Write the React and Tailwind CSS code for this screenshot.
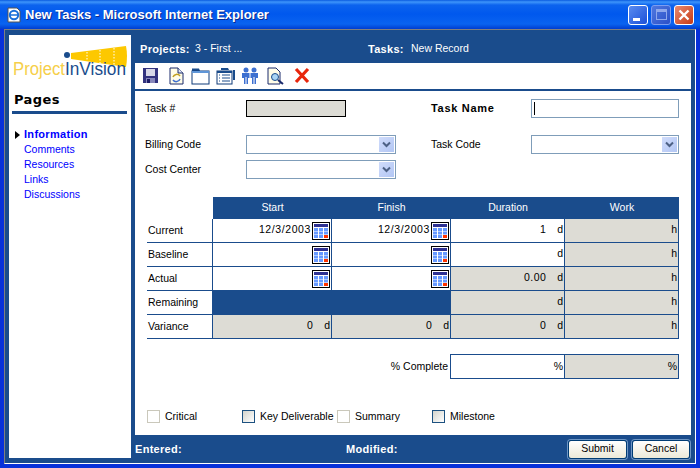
import React from 'react';

const labelFont = "font-['Liberation_Sans',sans-serif] text-[10.5px]";
const boldFont = "font-['Liberation_Sans',sans-serif] text-[11px] font-bold tracking-[0.3px]";

const CalendarIcon = () => (
  <svg width="18" height="18" viewBox="0 0 18 18" className="block mr-[1px]">
    <rect x="0" y="0" width="18" height="18" fill="#000" />
    <rect x="1" y="1" width="16" height="16" fill="#fff" />
    <rect x="2" y="2" width="14" height="3" fill="#2e3192" />
    {[6, 9.5, 13].map((y) =>
      [2, 7, 12].map((x) => (
        <rect key={`${x}-${y}`} x={x} y={y} width="4" height="3" fill={x === 12 && y === 13 ? '#ff3300' : '#6699ff'} />
      ))
    )}
  </svg>
);

const Chevron = () => (
  <div className="w-[15px] h-[15px] bg-[linear-gradient(135deg,#d0dcfb,#b2c6f4)] flex items-center justify-center">
    <svg width="9" height="7" viewBox="0 0 9 7">
      <path d="M1 1.5 L4.5 5 L8 1.5" fill="none" stroke="#4d6185" strokeWidth="2" />
    </svg>
  </div>
);

const SelectBox = ({ className }) => (
  <div className={`h-[19px] border border-[#7f9db9] bg-white flex items-center justify-end pr-[1px] ${className}`}>
    <Chevron />
  </div>
);

const ToolIcon = ({ className, children }) => (
  <svg width="20" height="18" viewBox="0 0 20 18" className={className}>
    {children}
  </svg>
);

const Toolbar = () => (
  <div className="h-[26px] bg-white flex items-center pl-[8px] mr-[4px]">
    <ToolIcon>
      <path d="M0 1 H15 V16 H0 Z" fill="#33337f" />
      <rect x="3" y="2" width="9" height="7" fill="#d8d8e8" />
      <rect x="3" y="11" width="9" height="5" fill="#8888bb" />
      <rect x="4" y="12" width="3" height="4" fill="#1c1c66" />
    </ToolIcon>
    <ToolIcon className="ml-[5px]">
      <path d="M2 1 H10 L15 6 V17 H2 Z" fill="#fffde8" stroke="#1a2a6c" />
      <path d="M10 1 V6 H15" fill="#dfe6f5" stroke="#1a2a6c" />
      <path d="M5 10 A4 4 0 0 1 12 9" fill="none" stroke="#c0a020" strokeWidth="1.5" />
      <path d="M12 12 A4 4 0 0 1 5 13" fill="none" stroke="#3f6fd0" strokeWidth="1.5" />
    </ToolIcon>
    <ToolIcon className="ml-[3px]">
      <path d="M1 4 V1.5 H8 L9 4" fill="#1a4c8c" />
      <rect x="1" y="4" width="17" height="13" fill="#fff" stroke="#0f3a78" strokeWidth="1" />
      <rect x="1" y="4" width="17" height="2" fill="#5f96d8" />
    </ToolIcon>
    <ToolIcon className="ml-[5px]">
      <path d="M5 3 V1 H12 L13 3 H19 V13 H17 V3" fill="#1a4c8c" />
      <rect x="1" y="4" width="15" height="13" fill="#fff" stroke="#0f3a78" />
      <rect x="1" y="4" width="15" height="2" fill="#1a4c8c" />
      <path d="M3 8 H4 M6 8 H14 M3 11 H4 M6 11 H14 M3 14 H4 M6 14 H14" stroke="#1a4c8c" />
    </ToolIcon>
    <ToolIcon className="ml-[6px]">
      <circle cx="4" cy="3" r="2.5" fill="#3c6fd0" />
      <circle cx="12" cy="3" r="2.5" fill="#3c6fd0" />
      <path d="M0 6 H7.5 V11 H6 V17 H2 V11 H0 Z M8.5 6 H16 V11 H14 V17 H10 V11 H8.5 Z" fill="#3c6fd0" />
      <path d="M4 10 V17 M12 10 V17" stroke="#fff" />
    </ToolIcon>
    <ToolIcon className="ml-[5px]">
      <path d="M1 1 H9 L13 5 V17 H1 Z" fill="#fffde8" stroke="#1a2a6c" />
      <circle cx="8" cy="10" r="3.5" fill="#a8d4f4" stroke="#1a4c8c" />
      <path d="M11 13 L16 17" stroke="#1a2a6c" strokeWidth="2" />
    </ToolIcon>
    <ToolIcon className="ml-[7px]">
      <path d="M2 2 L14 15 M14 2 L2 15" stroke="#e8260c" strokeWidth="3.2" />
    </ToolIcon>
  </div>
);

const Logo = () => (
  <svg width="122" height="38" viewBox="0 0 122 38" className="block ml-[3px] mt-[9px]">
    <path d="M59 9 L114 2 Q116 12 114 23 L59 15 Z" fill="#fdc800" />
    <path d="M75 8 V17 M88 6 V20 M102 4 V22" stroke="#fff" strokeDasharray="1.5 1.5" />
    <circle cx="55" cy="11" r="3" fill="#1a4c8c" />
    <text x="1" y="31" fontFamily="Liberation Sans" fontSize="18" fill="#f6cf4a" textLength="52" lengthAdjust="spacingAndGlyphs">Project</text>
    <text x="53" y="31" fontFamily="Liberation Sans" fontSize="18" fill="#1a4c8c" textLength="61" lengthAdjust="spacingAndGlyphs">InVision</text>
  </svg>
);

const navItems = ['Comments', 'Resources', 'Links', 'Discussions'];

const Sidebar = () => (
  <div className="w-[122px] mb-[5px] bg-white shrink-0">
    <Logo />
    <div className="mt-[8px] ml-[3px] mr-[4px] border-b-[3px] border-[#1a4c8c] h-[24px] pl-[2px] font-['DejaVu_Sans',sans-serif] font-bold text-[13px] leading-[20px] text-black tracking-[0.4px]">
      Pages
    </div>
    <div className={`${labelFont} text-[#0000ff] mt-[13px] pl-[15px] leading-[15px]`}>
      <div className={`${boldFont} flex items-center`}>
        <span className="w-0 -ml-[9px] mr-[4px] h-0 border-y-[4px] border-y-transparent border-l-[5px] border-l-black" />
        Information
      </div>
      {navItems.map((item) => (
        <div key={item}>{item}</div>
      ))}
    </div>
  </div>
);

const NumCell = ({ value, unit, gray }) => (
  <div className={`border-r border-b border-[#1a4c8c] flex items-center justify-end pr-[1px] pb-[1px] ${gray ? 'bg-[#dddcd5]' : 'bg-white'}`}>
    {value && <span className="tracking-[0.4px]">{value}</span>}
    <span className={value ? 'ml-[11px]' : ''}>{unit}</span>
  </div>
);

const DateCell = ({ value }) => (
  <div className="border-r border-b border-[#1a4c8c] bg-white flex items-center justify-end">
    {value && <span className="mr-[1px] pb-[1px] tracking-[0.6px]">{value}</span>}
    <CalendarIcon />
  </div>
);

const RowLabel = ({ children }) => (
  <div className="border-r border-b border-[#1a4c8c] flex items-center pl-[1px] pt-[1px]">{children}</div>
);

const ScheduleTable = () => (
  <div className={`${labelFont} ml-[12px] mt-[18px] w-[532px] grid grid-cols-[66px_119px_119px_114px_114px] grid-rows-[22px_24px_24px_24px_24px_24px] text-black`}>
    <div />
    {['Start', 'Finish', 'Duration', 'Work'].map((h) => (
      <div key={h} className="bg-[#1a4c8c] text-white flex items-center justify-center">{h}</div>
    ))}

    <RowLabel>Current</RowLabel>
    <DateCell value="12/3/2003" />
    <DateCell value="12/3/2003" />
    <NumCell value="1" unit="d" />
    <NumCell unit="h" gray />

    <RowLabel>Baseline</RowLabel>
    <DateCell />
    <DateCell />
    <NumCell unit="d" />
    <NumCell unit="h" gray />

    <RowLabel>Actual</RowLabel>
    <DateCell />
    <DateCell />
    <NumCell value="0.00" unit="d" gray />
    <NumCell unit="h" gray />

    <RowLabel>Remaining</RowLabel>
    <div className="col-span-2 bg-[#1a4c8c] border-r border-b border-[#1a4c8c]" />
    <NumCell unit="d" gray />
    <NumCell unit="h" gray />

    <RowLabel>Variance</RowLabel>
    <NumCell value="0" unit="d" gray />
    <NumCell value="0" unit="d" gray />
    <NumCell value="0" unit="d" gray />
    <NumCell unit="h" gray />
  </div>
);

const PercentRow = () => (
  <div className={`${labelFont} mt-[15px] ml-[12px] flex h-[25px] text-black`}>
    <div className="w-[303px] flex items-center justify-end pr-[2px]">% Complete</div>
    <div className="w-[115px] border border-[#1a4c8c] bg-white flex items-center justify-end pr-[1px]">%</div>
    <div className="w-[114px] border-y border-r border-[#1a4c8c] bg-[#dddcd5] flex items-center justify-end pr-[1px]">%</div>
  </div>
);

const Check = ({ label, active, className }) => (
  <div className={`flex items-center whitespace-nowrap ${className}`}>
    <span className={`w-[13px] h-[13px] border shrink-0 ${active ? 'border-[#1c5180] bg-[linear-gradient(135deg,#d4d4cc,#ffffff)]' : 'border-[#cac8bb] bg-white'}`} />
    <span className="ml-[5px]">{label}</span>
  </div>
);

const Button = ({ label, className }) => (
  <button className={`h-[19px] border border-[#003c74] rounded-[3px] bg-[linear-gradient(180deg,#ffffff,#ece9d8)] shadow-[0_0_0_1px_#6f96c4] text-black ${className}`}>
    {label}
  </button>
);

const App = () => {
  return (
    <div className="w-[700px] h-[468px] flex flex-col bg-[#0831d9] overflow-hidden">
      {/* XP title bar */}
      <div className="h-[29px] shrink-0 flex items-center pl-[5px] pr-[6px] bg-[linear-gradient(180deg,#0a5be0_0px,#3e95fb_2px,#0c63ee_5px,#0058ee_14px,#0a63f0_24px,#003dd0_29px)]">
        <svg width="18" height="18" viewBox="0 0 18 18" className="shrink-0">
          <path d="M3 2 H12 L15 5 V16 H3 Z" fill="#fff" stroke="#555" />
          <circle cx="9" cy="9" r="4.2" fill="none" stroke="#1a6fd8" strokeWidth="2" />
          <path d="M5 9 H13" stroke="#1a6fd8" strokeWidth="1.5" />
        </svg>
        <div className="ml-[2px] font-['Liberation_Sans',sans-serif] font-bold text-[13px] text-white [text-shadow:1px_1px_0_#0a2a8c]">
          New Tasks - Microsoft Internet Explorer
        </div>
        <div className="ml-auto flex gap-[3px]">
          <div className="w-[20px] h-[20px] rounded-[3px] border border-white bg-[linear-gradient(135deg,#5a8cf0,#1c50d8)] flex items-end pl-[4px] pb-[3px]">
            <div className="w-[7px] h-[3px] bg-white" />
          </div>
          <div className="w-[20px] h-[20px] rounded-[3px] border border-[#7d9df0] bg-[linear-gradient(135deg,#4f78e0,#2b50c8)] flex items-center justify-center">
            <div className="w-[11px] h-[11px] border border-[#8fa8ec] border-t-[3px]" />
          </div>
          <div className="w-[20px] h-[20px] rounded-[3px] border border-white bg-[linear-gradient(135deg,#e88a70,#c73a14)] flex items-center justify-center">
            <svg width="12" height="12" viewBox="0 0 12 12">
              <path d="M1.5 1.5 L10.5 10.5 M10.5 1.5 L1.5 10.5" stroke="#fff" strokeWidth="2.4" />
            </svg>
          </div>
        </div>
      </div>

      {/* Page area */}
      <div className="flex-1 mx-[4px] mb-[4px] min-h-0 flex bg-[#1a4c8c] border-t border-l border-t-[#808080] border-l-[#808080] border-r border-b border-r-white border-b-white pl-[4px]">
        <div className="flex pt-[5px] w-full min-w-0">
          <Sidebar />
          <div className="flex-1 min-w-0 ml-[4px] flex flex-col">
            <div className={`${labelFont} h-[28px] shrink-0 flex items-center pl-[5px] text-white`}>
              <div className="w-[228px] flex items-center">
                <span className={`${boldFont} w-[55px]`}>Projects:</span>
                <span>3 - First ...</span>
              </div>
              <span className={`${boldFont} w-[43px]`}>Tasks:</span>
              <span>New Record</span>
            </div>
            <Toolbar />
            <div className="mt-[2px] mr-[4px] flex-1 min-h-0 bg-white text-black">
              <div className={`${labelFont} pl-[10px] pt-[8px]`}>
                <div className="flex h-[19px] items-center">
                  <div className="w-[101px]">Task #</div>
                  <div className="w-[100px] h-[17px] border border-black bg-[#dddcd5]" />
                  <div className={`${boldFont} tracking-[0.7px] ml-[85px] w-[100px]`}>Task Name</div>
                  <div className="w-[148px] h-[19px] border border-[#7f9db9] flex items-center pl-[2px]">
                    <div className="w-px h-[13px] bg-black" />
                  </div>
                </div>
                <div className="flex h-[19px] items-center mt-[17px]">
                  <div className="w-[101px] pt-[1px]">Billing Code</div>
                  <SelectBox className="w-[150px]" />
                  <div className="ml-[35px] w-[100px] pt-[1px]">Task Code</div>
                  <SelectBox className="w-[148px]" />
                </div>
                <div className="flex h-[19px] items-center mt-[6px]">
                  <div className="w-[101px] pt-[1px]">Cost Center</div>
                  <SelectBox className="w-[150px]" />
                </div>
              </div>
              <ScheduleTable />
              <PercentRow />
              <div className={`${labelFont} mt-[31px] ml-[12px] flex h-[13px]`}>
                <Check label="Critical" className="w-[95px]" />
                <Check label="Key Deliverable" active className="w-[95px]" />
                <Check label="Summary" className="w-[95px]" />
                <Check label="Milestone" active />
              </div>
            </div>
            <div className="h-[28px] shrink-0 flex items-center text-white">
              <span className={boldFont}>Entered:</span>
              <span className={`${boldFont} ml-[164px]`}>Modified:</span>
              <div className={`${labelFont} ml-auto mr-[5px] flex gap-[5px]`}>
                <Button label="Submit" className="w-[59px]" />
                <Button label="Cancel" className="w-[58px]" />
              </div>
            </div>
          </div>
        </div>
      </div>
    </div>
  );
};

export default App;
